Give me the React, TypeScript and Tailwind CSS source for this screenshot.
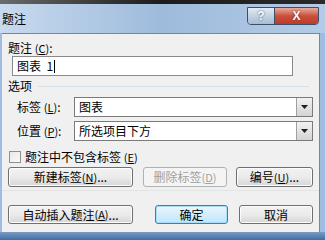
import React from 'react';

const FONT = { fontFamily: '"Noto Sans CJK SC", "Liberation Sans", sans-serif' };

function Key({ k }: { k: string }) {
  return (
    <span className="text-[11px] leading-none">
      (<span className="underline">{k}</span>)
    </span>
  );
}

function Btn({
  children,
  className = '',
  primary = false,
  disabled = false,
}: {
  children: React.ReactNode;
  className?: string;
  primary?: boolean;
  disabled?: boolean;
}) {
  return (
    <div
      className={`flex items-center justify-center rounded-[3px] border text-[12px] leading-none ${
        primary
          ? 'border-[#3c7fb1] bg-gradient-to-b from-[#eaf6fd] to-[#bee6fd] shadow-[inset_0_0_0_1px_#a8dcf7]'
          : disabled
          ? 'border-[#adb2b5] bg-[#f4f4f4] text-[#a0a0a0]'
          : 'border-[#707070] bg-gradient-to-b from-[#f2f2f2] via-[#ebebeb] to-[#d6d6d6] shadow-[inset_0_0_0_1px_#fcfcfc]'
      } ${className}`}
    >
      {children}
    </div>
  );
}

function Combo({ value }: { value: string }) {
  return (
    <div className="w-[239px] h-[20px] flex items-center bg-white border border-[#7a7a7a] pl-[4px]">
      <span className="flex-1 text-[12px] leading-none">{value}</span>
      <div className="w-[16px] h-[18px] flex items-center justify-center border-l border-[#a0a0a0] bg-gradient-to-b from-[#f2f2f2] to-[#d4d4d4]">
        <svg width="7" height="4" viewBox="0 0 7 4">
          <path d="M0 0h7L3.5 4z" fill="#202020" />
        </svg>
      </div>
    </div>
  );
}

export default function App() {
  return (
    <div
      className="w-[325px] h-[240px] overflow-hidden flex flex-col bg-[#9fbde0] text-[#000]"
      style={FONT}
    >
      {/* strip of the window behind */}
      <div className="h-[4px] shrink-0 bg-gradient-to-r from-[#6b6b6b] via-[#1c1c1c] to-[#2a2a2a]" />

      {/* title bar */}
      <div className="h-[29px] shrink-0 flex items-start bg-gradient-to-r from-[#c8daee] via-[#9ebbdc] to-[#b3cbe6]">
        <span className="ml-[2px] mt-[7px] text-[12px] leading-[16px]">题注</span>
        <div className="ml-auto mt-[3px] mr-[6px] flex h-[18px] rounded-b-[4px] border border-[#3b4f67] overflow-hidden">
          <div className="w-[27px] flex items-center justify-center bg-gradient-to-b from-[#e3ebf4] via-[#c3d2e3] to-[#a9bcd3] border-r border-[#3b4f67]">
            <span className="text-white text-[12px] font-bold leading-none [text-shadow:0_0_2px_#2b3d55]" style={{ fontFamily: '"Liberation Sans", sans-serif' }}>?</span>
          </div>
          <div className="w-[43px] flex items-center justify-center bg-gradient-to-b from-[#e9a99c] via-[#c8503c] to-[#c03a28]">
            <span className="text-white text-[12px] font-bold leading-none [text-shadow:0_0_2px_#5a1a10]" style={{ fontFamily: '"Liberation Sans", sans-serif' }}>X</span>
          </div>
        </div>
      </div>

      {/* client area */}
      <div className="mx-[2px] mr-[5px] h-[199px] shrink-0 bg-[#f0f0f0] border-t border-r border-[#6f88a6] flex flex-col pl-[6px] pr-[6px] text-[12px]">
        <div className="mt-[6px] h-[16px] shrink-0 flex items-center">
          <span className="leading-none">
            题注 <Key k="C" />:
          </span>
        </div>
        <div className="ml-[4px] w-[281px] h-[20px] shrink-0 bg-white border border-[#8a8a8a] flex items-center pl-[4px]">
          <span className="leading-none">图表&nbsp;&nbsp;1</span>
          <span className="w-[1px] h-[13px] bg-black ml-[1px]" />
        </div>

        <div className="mt-[2px] h-[16px] shrink-0 flex items-center">
          <span className="leading-none">选项</span>
          <div className="flex-1 ml-[6px] mr-[4px] h-[1px] bg-[#d5dfe5]" />
        </div>

        <div className="mt-[3px] h-[20px] shrink-0 flex items-center">
          <span className="ml-[9px] w-[57px] leading-none">
            标签 <Key k="L" />:
          </span>
          <Combo value="图表" />
        </div>
        <div className="mt-[4px] h-[20px] shrink-0 flex items-center">
          <span className="ml-[9px] w-[57px] leading-none">
            位置 <Key k="P" />:
          </span>
          <Combo value="所选项目下方" />
        </div>

        <div className="mt-[10px] h-[12px] shrink-0 flex items-center">
          <div className="ml-[1px] w-[12px] h-[12px] border border-[#8e8f8f] bg-gradient-to-br from-[#e8e8e8] to-[#fafafa]" />
          <span className="ml-[4px] leading-none">
            题注中不包含标签 <Key k="E" />
          </span>
        </div>

        <div className="mt-[4px] h-[20px] shrink-0 flex">
          <Btn className="w-[125px]">
            新建标签 <Key k="N" />...
          </Btn>
          <Btn className="w-[84px] ml-[10px]" disabled>
            删除标签 <Key k="D" />
          </Btn>
          <Btn className="w-[77px] ml-[9px]">
            编号 <Key k="U" />...
          </Btn>
        </div>

        <div className="mt-[3px] -mx-[6px] h-[1px] shrink-0 bg-[#e3e3e3]" />

        <div className="mt-[14px] h-[19px] shrink-0 flex">
          <Btn className="w-[125px]">
            自动插入题注 <Key k="A" />...
          </Btn>
          <Btn className="w-[73px] ml-[22px]" primary>
            确定
          </Btn>
          <Btn className="w-[74px] ml-[11px]">取消</Btn>
        </div>
      </div>

      {/* bottom frame */}
      <div className="flex-1 bg-gradient-to-b from-[#7a9cc6] to-[#3f6ea3]" />
    </div>
  );
}
